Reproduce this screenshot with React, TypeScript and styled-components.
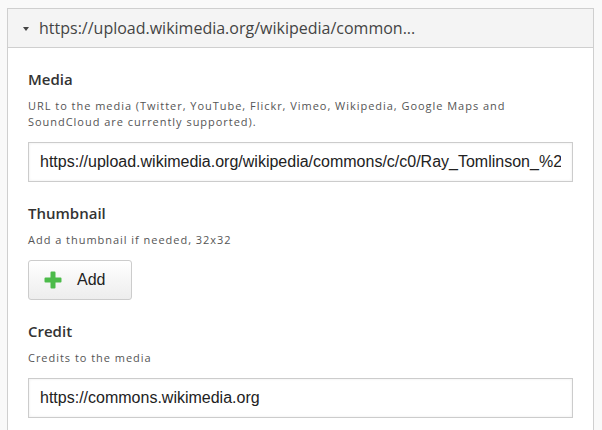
import React from "react";
import styled, { createGlobalStyle } from "styled-components";

const Global = createGlobalStyle`
  html, body { margin: 0; padding: 0; background: #f9f9f9; }
  body { font-family: "Open Sans", "Liberation Sans", Arial, sans-serif; }
  * { box-sizing: border-box; }
`;

const Page = styled.div`
  padding: 8px 8px 0 7px;
  width: 602px;
  height: 430px;
  overflow: hidden;
`;

const Panel = styled.section`
  width: 587px;
  border: 1px solid #cfcfcf;
  border-bottom: none;
  background: #fff;
  min-height: 440px;
`;

const Header = styled.div`
  display: flex;
  align-items: center;
  height: 39px;
  padding: 0 0 0 15px;
  background: #f4f4f4;
  border-bottom: 1px solid #cfcfcf;
  font-size: 16px;
  color: #444;
`;

const Caret = styled.span`
  width: 0;
  height: 0;
  border-left: 3.5px solid transparent;
  border-right: 3.5px solid transparent;
  border-top: 4px solid #444;
  margin: 1px 10px 0 0;
`;

const Body = styled.div`
  padding: 0 20px;
`;

const Field = styled.div`
  padding-top: 21px;
`;

const Label = styled.div`
  font-size: 15px;
  font-weight: 600;
  line-height: 20px;
  color: #333;
  margin-bottom: 9px;
`;

const Help = styled.div`
  font-size: 11px;
  line-height: 16px;
  color: #555;
  letter-spacing: 0.97px;
  margin-bottom: 12px;
`;

const TextInput = styled.input`
  display: block;
  width: 100%;
  height: 40px;
  padding: 0 11px;
  border: 1px solid #cccccc;
  background: #fff;
  box-shadow: inset 0 0 3px rgba(0, 0, 0, 0.08);
  font-family: "Liberation Sans", Arial, sans-serif;
  font-size: 16px;
  color: #222;
  outline: none;
`;

const AddButton = styled.button`
  display: flex;
  align-items: center;
  gap: 15px;
  height: 40px;
  width: 104px;
  padding: 0 0 0 15px;
  border: 1px solid #cccccc;
  border-radius: 3px;
  background: linear-gradient(#ffffff, #ededed);
  font-family: "Liberation Sans", Arial, sans-serif;
  font-size: 16px;
  color: #222;
  cursor: pointer;
`;

const PlusIcon = () => (
  <svg width="18" height="18" viewBox="0 0 18 18" aria-hidden="true">
    <path
      d="M6.5 1.5 Q6.5 0.5 7.5 0.5 H10.5 Q11.5 0.5 11.5 1.5 V6.5 H16.5 Q17.5 6.5 17.5 7.5 V10.5 Q17.5 11.5 16.5 11.5 H11.5 V16.5 Q11.5 17.5 10.5 17.5 H7.5 Q6.5 17.5 6.5 16.5 V11.5 H1.5 Q0.5 11.5 0.5 10.5 V7.5 Q0.5 6.5 1.5 6.5 H6.5 Z"
      fill="#4cbb4a"
    />
  </svg>
);

export default function App() {
  return (
    <Page>
      <Global />
      <Panel>
        <Header>
          <Caret />
          https://upload.wikimedia.org/wikipedia/common...
        </Header>
        <Body>
          <Field>
            <Label>Media</Label>
            <Help>
              URL to the media (Twitter, YouTube, Flickr, Vimeo, Wikipedia, Google Maps and
              SoundCloud are currently supported).
            </Help>
            <TextInput
              readOnly
              value="https://upload.wikimedia.org/wikipedia/commons/c/c0/Ray_Tomlinson_%28cropped%29.jpg"
            />
          </Field>
          <Field>
            <Label>Thumbnail</Label>
            <Help>Add a thumbnail if needed, 32x32</Help>
            <AddButton type="button">
              <PlusIcon />
              Add
            </AddButton>
          </Field>
          <Field>
            <Label>Credit</Label>
            <Help>Credits to the media</Help>
            <TextInput readOnly value="https://commons.wikimedia.org" />
          </Field>
        </Body>
      </Panel>
    </Page>
  );
}
